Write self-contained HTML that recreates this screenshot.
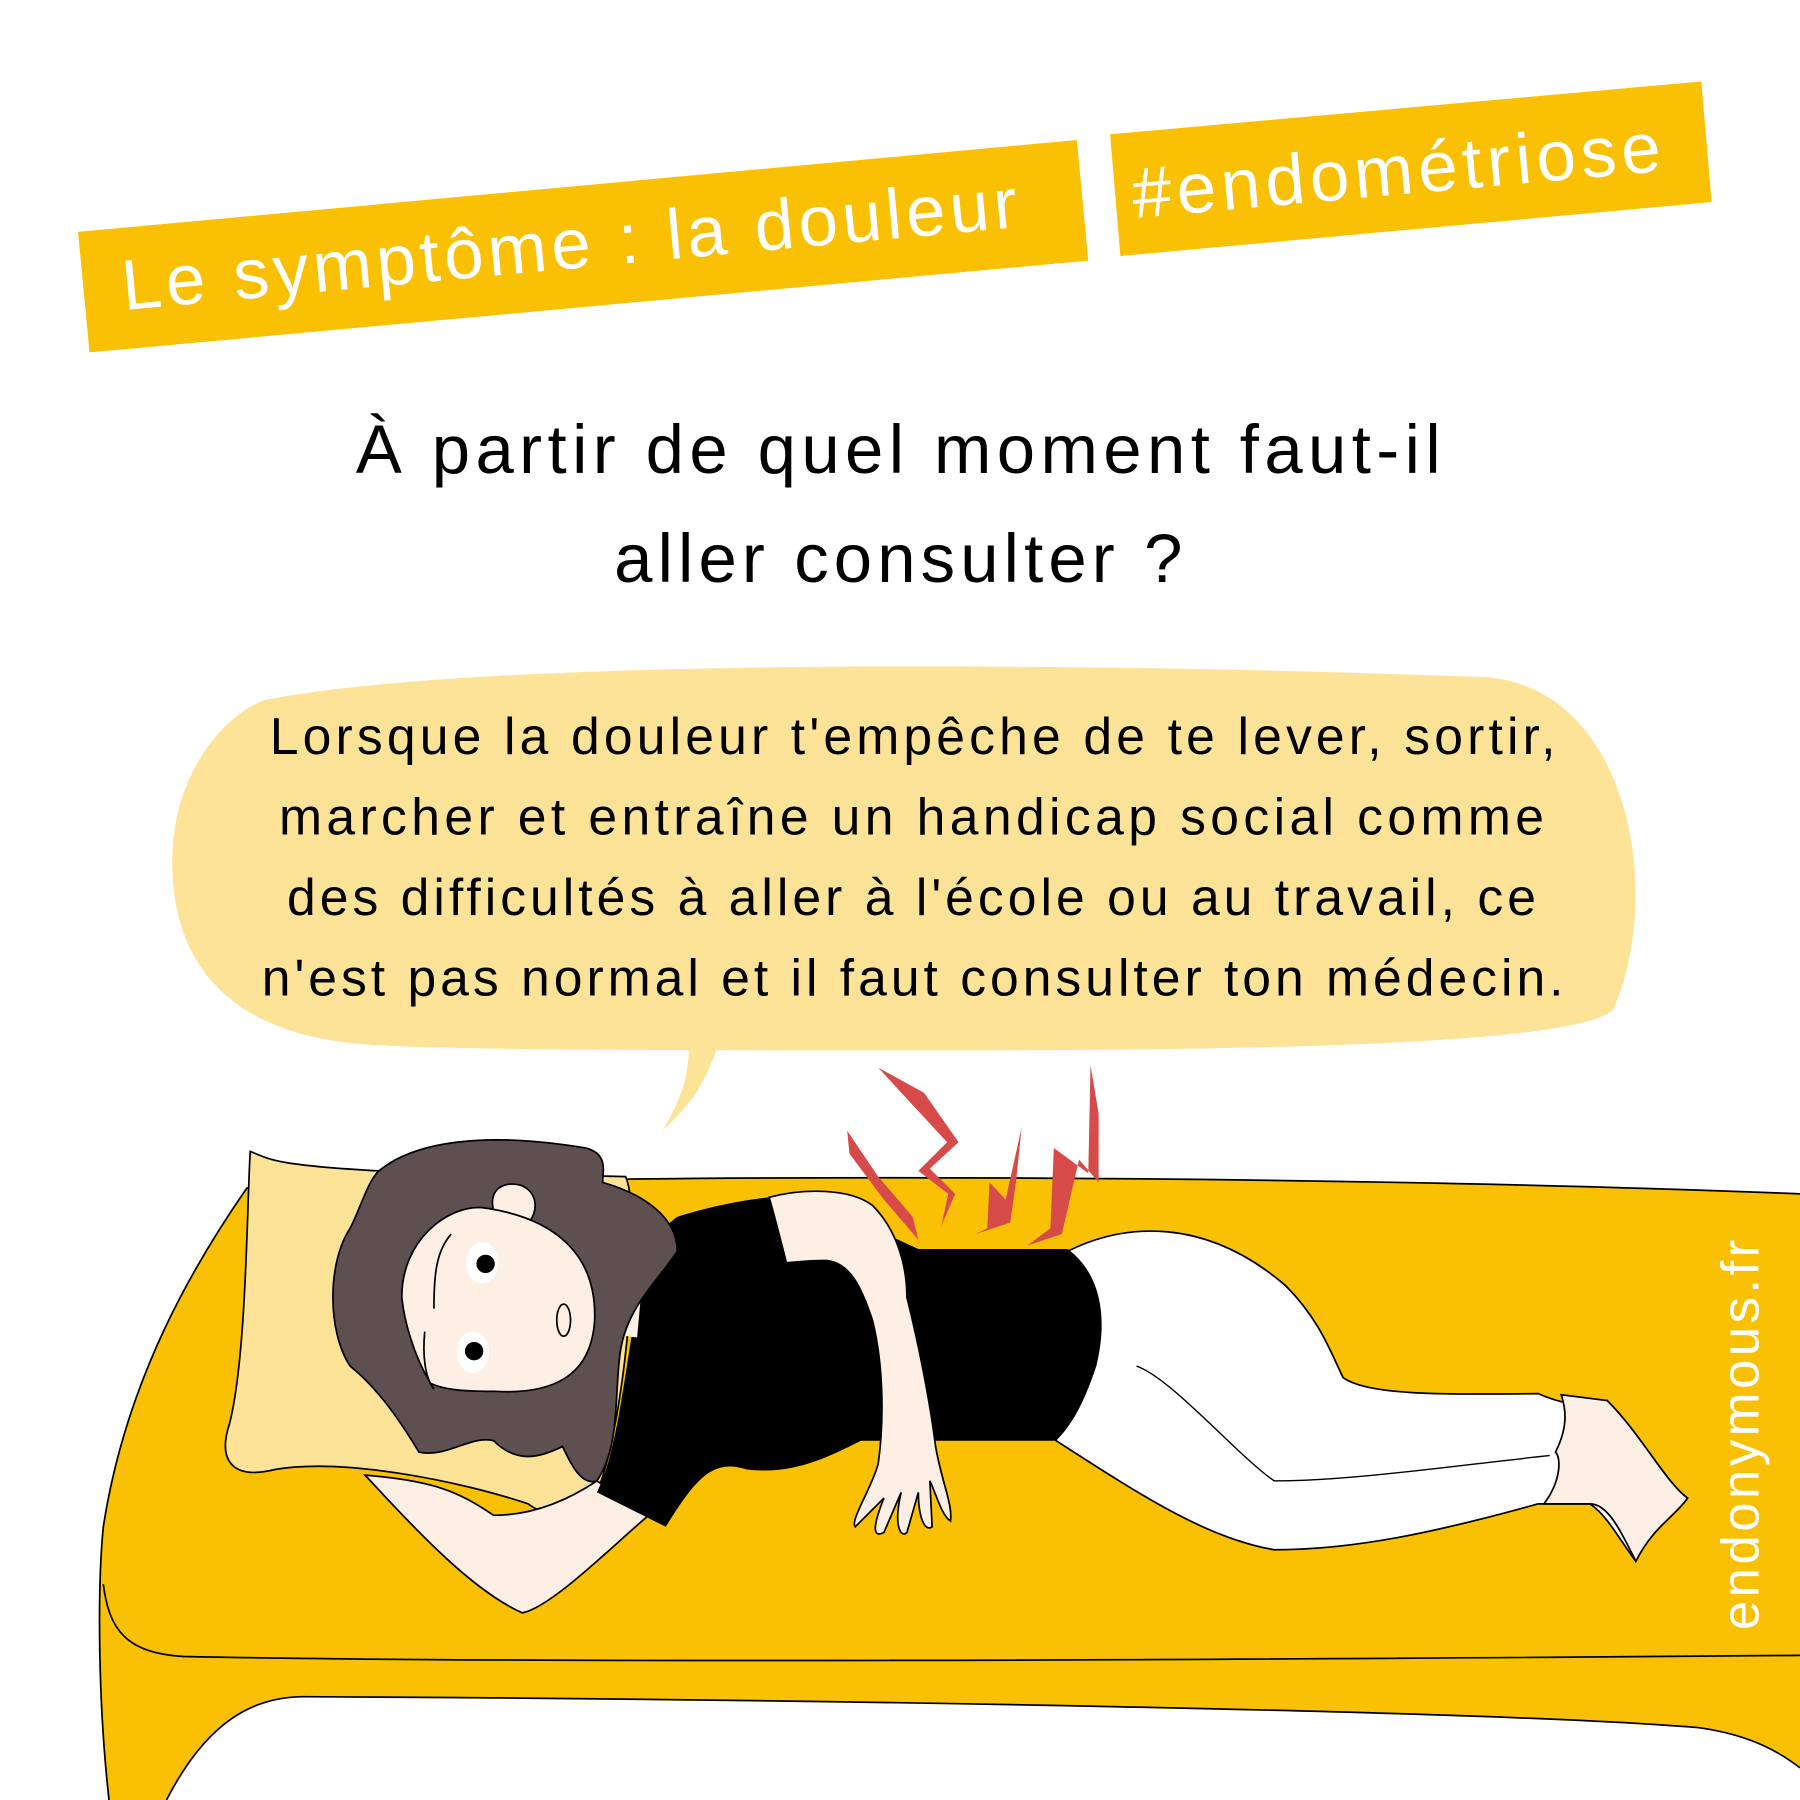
<!DOCTYPE html>
<html><head><meta charset="utf-8"><style>
html,body{margin:0;padding:0;background:#fff;}
svg{display:block;}
text{font-family:"Liberation Sans","DejaVu Sans",sans-serif;}
</style></head><body>
<svg width="1800" height="1800" viewBox="0 0 1568 1568" xmlns="http://www.w3.org/2000/svg">
<rect width="1568" height="1568" fill="#fff"/>
<!-- banners -->
<polygon points="68,202 938,122 948,227 78,307" fill="#f9c004"/>
<text x="108" y="270" transform="rotate(-5.3 108 270)" font-size="62" fill="#fff" textLength="783" lengthAdjust="spacing">Le symptôme : la douleur</text>
<polygon points="967,117 1482,71 1491,176 976,223" fill="#f9c004"/>
<text x="988" y="190" transform="rotate(-5.1 988 190)" font-size="62" fill="#fff" textLength="462" lengthAdjust="spacing">#endométriose</text>
<!-- question -->
<text x="310" y="412" font-size="60" fill="#000" textLength="945" lengthAdjust="spacing">À partir de quel moment faut-il</text>
<text x="535" y="507" font-size="60" fill="#000" textLength="495" lengthAdjust="spacing">aller consulter ?</text>
<!-- bubble -->
<path d="M230,610 C400,575 900,575 1295,590 C1420,600 1450,780 1405,880 C1370,910 1100,915 800,915 C600,915 400,915 320,910 C180,900 150,820 150,750 C150,680 190,625 230,610 Z" fill="#fde397"/>
<path d="M600,912 L625,912 C612,950 598,965 577,985 C595,955 600,935 600,912 Z" fill="#fde397"/>
<g font-size="45" fill="#000" lengthAdjust="spacing">
<text x="235" y="657" textLength="1120" lengthAdjust="spacing">Lorsque la douleur t'empêche de te lever, sortir,</text>
<text x="243" y="727" textLength="1102" lengthAdjust="spacing">marcher et entraîne un handicap social comme</text>
<text x="250" y="797" textLength="1088" lengthAdjust="spacing">des difficultés à aller à l'école ou au travail, ce</text>
<text x="228" y="867" textLength="1134" lengthAdjust="spacing">n'est pas normal et il faut consulter ton médecin.</text>
</g>
<!-- bed -->
<path d="M1568,1040 C1200,1025 600,1020 215,1035 C170,1100 110,1200 90,1330 C85,1380 85,1480 95,1568 L1568,1568 Z" fill="#f9c004"/>
<path d="M1568,1040 C1200,1025 600,1020 215,1035 C170,1100 110,1200 90,1330 C85,1380 85,1480 95,1568" fill="none" stroke="#000" stroke-width="1.5"/>
<path d="M90,1380 C95,1420 110,1440 160,1443 C500,1450 1200,1445 1568,1442" fill="none" stroke="#000" stroke-width="1.5"/>
<path d="M145,1568 C180,1500 220,1478 265,1478 C700,1480 1300,1490 1480,1505 C1530,1512 1555,1530 1568,1540 L1568,1568 Z" fill="#fff"/>
<path d="M145,1568 C180,1500 220,1478 265,1478 C700,1480 1300,1490 1480,1505 C1530,1512 1555,1530 1568,1540" fill="none" stroke="#000" stroke-width="1.5"/>
<!-- pillow -->
<path d="M218,1003 C235,1010 240,1015 330,1020 L545,1025 C560,1060 545,1240 520,1300 C500,1320 480,1325 460,1310 C400,1290 300,1270 240,1280 C200,1290 190,1270 200,1240 C215,1180 215,1050 218,1003 Z" fill="#fde397" stroke="#000" stroke-width="1.5"/>
<!-- arm under head -->
<path d="M318,1285 C360,1330 410,1385 455,1405 C480,1400 530,1350 565,1320 L520,1290 C490,1310 460,1320 430,1320 C400,1300 380,1290 318,1285 Z" fill="#fdefe4" stroke="#000" stroke-width="1.5"/>
<!-- legs -->
<path d="M930,1090 C980,1065 1050,1060 1120,1120 C1150,1150 1160,1180 1170,1200 C1190,1215 1250,1215 1340,1214 C1365,1225 1380,1225 1400,1220 C1430,1250 1450,1290 1470,1305 C1460,1320 1440,1330 1425,1360 C1410,1340 1400,1320 1385,1310 L1340,1310 C1250,1335 1180,1350 1110,1350 C1050,1340 990,1300 920,1255 Z" fill="#fff" stroke="#000" stroke-width="1.5"/>
<path d="M1360,1215 L1400,1220 C1430,1250 1450,1290 1470,1305 C1460,1320 1440,1330 1425,1360 C1410,1330 1400,1310 1385,1310 L1345,1310 C1360,1290 1360,1270 1355,1265 C1365,1245 1365,1230 1360,1215 Z" fill="#fdefe4" stroke="#000" stroke-width="1.5"/>
<path d="M990,1190 C1020,1200 1080,1270 1110,1290 C1180,1290 1280,1275 1350,1268" fill="none" stroke="#000" stroke-width="1.2"/>
<!-- body shirt -->
<path d="M590,1060 C620,1050 670,1040 700,1042 L800,1088 L930,1088 C960,1110 965,1150 955,1190 C945,1220 935,1240 920,1255 L750,1255 C720,1270 690,1285 650,1280 C620,1270 605,1290 580,1330 L520,1300 C540,1260 545,1180 560,1110 C565,1090 575,1070 590,1060 Z" fill="#000"/>
<path d="M515,1145 C530,1160 545,1165 555,1165 L560,1110 C545,1120 530,1130 515,1145 Z" fill="#fdefe4"/>
<!-- arm over body -->
<path d="M670,1043 C700,1035 740,1035 760,1050 C780,1070 790,1100 790,1130 C800,1170 810,1220 815,1260 C820,1290 830,1310 828,1325 C820,1320 815,1300 810,1290 L812,1330 C805,1335 800,1320 800,1300 L790,1335 C785,1340 778,1330 785,1300 L770,1335 C760,1340 760,1330 770,1305 L745,1330 C740,1325 760,1295 765,1275 C770,1240 770,1190 760,1150 C750,1120 740,1100 720,1098 C700,1098 690,1100 685,1100 C680,1080 675,1060 670,1043 Z" fill="#fdefe4" stroke="#000" stroke-width="1.5"/>
<!-- hair -->
<path d="M330,1020 C360,995 420,985 510,1000 C530,1005 525,1020 525,1030 C560,1040 590,1060 590,1090 C570,1120 545,1140 540,1180 C535,1220 540,1260 520,1290 C505,1295 495,1270 490,1260 C470,1270 450,1275 430,1255 C410,1250 390,1270 365,1265 C350,1240 330,1210 305,1190 C285,1160 285,1100 305,1070 C315,1050 320,1030 330,1020 Z" fill="#5e5050" stroke="#000" stroke-width="1.5"/>
<path d="M430,1055 C425,1035 440,1028 455,1033 C470,1040 468,1058 460,1065 Z" fill="#fdefe4" stroke="#000" stroke-width="1.5"/>
<!-- face -->
<path d="M350,1130 C350,1080 390,1050 420,1052 C480,1060 520,1090 518,1150 C515,1200 480,1215 430,1212 C400,1212 385,1210 375,1205 C360,1180 352,1150 350,1130 Z" fill="#fdefe4" stroke="#000" stroke-width="1.5"/>
<ellipse cx="420" cy="1100" rx="14" ry="18" fill="#fff"/>
<circle cx="423" cy="1101" r="8" fill="#000"/>
<ellipse cx="412" cy="1178" rx="14" ry="18" fill="#fff"/>
<circle cx="413" cy="1177" r="8" fill="#000"/>
<path d="M378,1140 C378,1110 380,1090 393,1075" fill="none" stroke="#000" stroke-width="1.5"/>
<path d="M370,1160 C368,1180 370,1200 378,1210" fill="none" stroke="#000" stroke-width="1.5"/>
<ellipse cx="491" cy="1150" rx="6" ry="14" fill="none" stroke="#000" stroke-width="1.5"/>
<!-- pain bolts -->
<g fill="#d64a4a">
<path d="M765,930 L805,952 L835,995 L810,1018 L832,1040 L820,1068 L826,1040 L800,1020 L825,995 Z"/>
<path d="M738,985 L765,1025 L795,1060 L800,1080 L770,1045 L740,1005 Z"/>
<path d="M890,982 L885,1030 L880,1065 L850,1075 L860,1070 L862,1030 L876,1045 Z"/>
<path d="M950,928 L957,970 L957,1030 L940,1010 L925,1075 L895,1085 L915,1070 L918,1000 L948,1022 Z"/>
</g>
<!-- watermark -->
<text x="1532" y="1420" transform="rotate(-90 1532 1420)" font-size="46" fill="#fff" textLength="340" lengthAdjust="spacing">endonymous.fr</text>
</svg>
</body></html>
